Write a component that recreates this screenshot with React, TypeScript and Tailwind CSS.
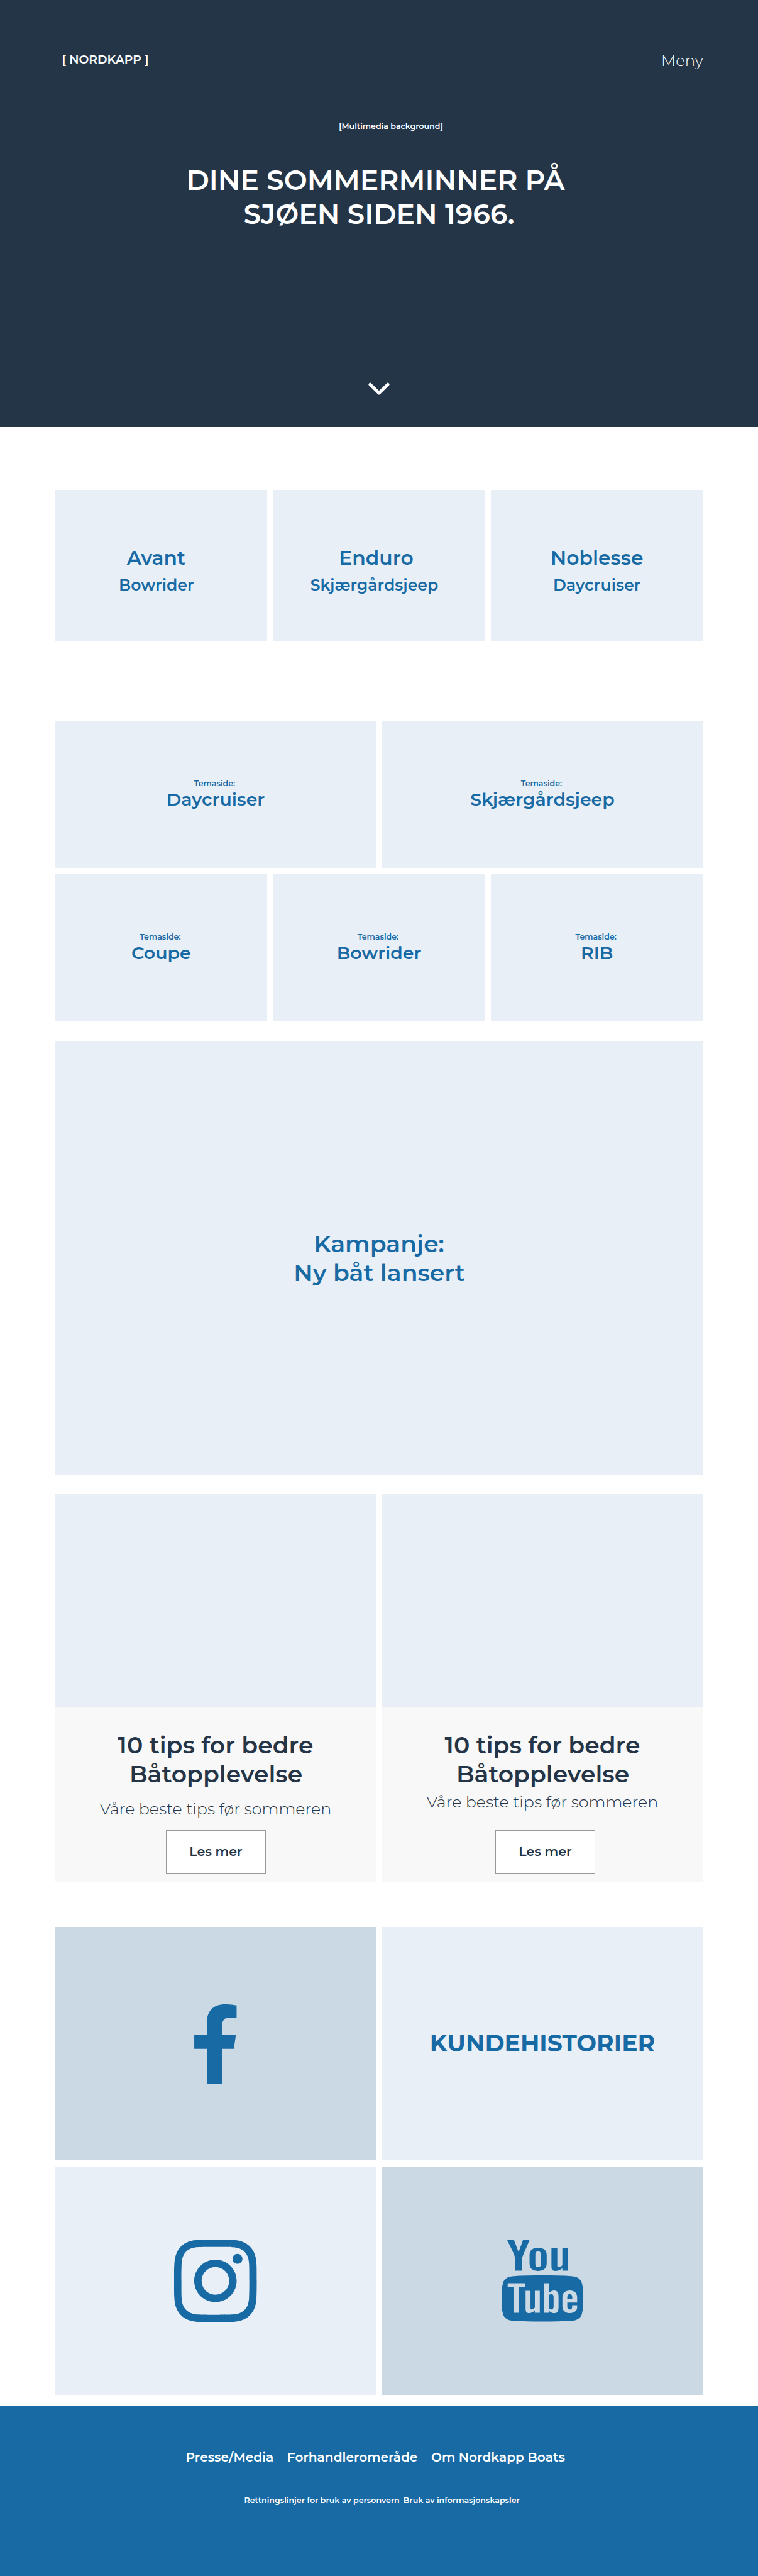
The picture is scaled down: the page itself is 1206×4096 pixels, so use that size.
import React from 'react';
import { TfiYoutube } from 'react-icons/tfi';

type Line = { text: string; className: string };

function Tile({ className, lines }: { className: string; lines: Line[] }) {
  return (
    <a className={`block text-center font-semibold whitespace-nowrap text-[#186aa5] ${className}`}>
      {lines.map((line) => (
        <span key={line.text} className={`block ${line.className}`}>
          {line.text}
        </span>
      ))}
    </a>
  );
}

const MODEL_CARD = 'h-[241px] bg-[#e8eff7] pt-[87px]';
const THEME_LABEL = 'text-[12.6px] leading-4 pr-[3px]';
const THEME_NAME = 'text-[28.4px] leading-[34px]';

function Hero() {
  return (
    <header className="h-[679px] bg-[#253548] text-white">
      <nav className="flex h-[114px] items-start justify-between pt-[78px] pr-[87.5px] pl-[98.5px] leading-[33px]">
        <span className="text-[18.8px] font-semibold">[ NORDKAPP ]</span>
        <a className="mt-[2px] text-[24.3px] font-light">Meny</a>
      </nav>
      <p className="mt-[79px] pl-[38px] text-center text-[12.6px] leading-4 font-semibold">
        [Multimedia background]
      </p>
      <h1 className="mt-[50px] text-center text-[44px] leading-[54px] font-semibold">
        <span className="block pr-[11px]">DINE SOMMERMINNER PÅ</span>
        <span className="block">SJØEN SIDEN 1966.</span>
      </h1>
      <svg className="mx-auto mt-[241px] block" width="34" height="21" viewBox="0 0 34 21" fill="none">
        <path d="M3 3.2L17 16.9L31 3.2" stroke="currentColor" strokeWidth="5" strokeLinecap="round" strokeLinejoin="round" />
      </svg>
    </header>
  );
}

function Models() {
  return (
    <section className="mt-[100px] grid grid-cols-3 gap-[10px]">
      <Tile
        className={MODEL_CARD}
        lines={[
          { text: 'Avant', className: 'pr-4 text-[31.2px] leading-[42px]' },
          { text: 'Bowrider', className: 'pr-[15px] text-[25.2px] leading-[44px]' },
        ]}
      />
      <Tile
        className={MODEL_CARD}
        lines={[
          { text: 'Enduro', className: 'pr-[9px] text-[31.4px] leading-[42px]' },
          { text: 'Skjærgårdsjeep', className: 'pr-[15px] text-[25.2px] leading-[44px]' },
        ]}
      />
      <Tile
        className={MODEL_CARD}
        lines={[
          { text: 'Noblesse', className: 'text-[31.4px] leading-[42px]' },
          { text: 'Daycruiser', className: 'text-[25.3px] leading-[44px]' },
        ]}
      />
    </section>
  );
}

function Theme({ name, className }: { name: string; className: string }) {
  return (
    <Tile
      className={`bg-[#e8eff7] ${className}`}
      lines={[
        { text: 'Temaside:', className: THEME_LABEL },
        { text: name, className: THEME_NAME },
      ]}
    />
  );
}

function Themes() {
  return (
    <section className="mt-[126px] grid gap-[9px]">
      <div className="grid grid-cols-2 gap-[10px]">
        <Theme name="Daycruiser" className="h-[234px] pt-[92px]" />
        <Theme name="Skjærgårdsjeep" className="h-[234px] pt-[92px]" />
      </div>
      <div className="grid grid-cols-3 gap-[10px]">
        <Theme name="Coupe" className="h-[235px] pt-[93px]" />
        <Theme name="Bowrider" className="h-[235px] pt-[93px]" />
        <Theme name="RIB" className="h-[235px] pt-[93px]" />
      </div>
    </section>
  );
}

function Tips({ leadClass, buttonClass }: { leadClass: string; buttonClass: string }) {
  return (
    <article className="text-center whitespace-nowrap text-[#253548]">
      <div className="h-[340px] bg-[#e8eff7]" />
      <div className="h-[277px] bg-[#f8f8f8] pt-[37px]">
        <h3 className="text-[37.7px] leading-[46px] font-semibold">
          <span className="block">10 tips for bedre</span>
          <span className="block pl-px">Båtopplevelse</span>
        </h3>
        <p className={`text-[25.3px] leading-8 font-[350] ${leadClass}`}>Våre beste tips før sommeren</p>
        <button
          className={`block h-[69px] w-[159px] border border-[#999999] bg-white text-[20.6px] font-semibold ${buttonClass}`}
        >
          Les mer
        </button>
      </div>
    </article>
  );
}

function FacebookIcon() {
  return (
    <svg className="h-[126px] w-[67.5px]" viewBox="0 0 322 602" fill="currentColor">
      <path d="M322 8V100H268C232 100 213 122 213 155V230H317L301 338H213V602H96V338H0V230H96V138C96 47 150 0 234 0C278 0 322 8 322 8Z" />
    </svg>
  );
}

function InstagramIcon() {
  return (
    <svg className="h-[131.5px] w-[131.5px]" viewBox="0 0 24 24" fill="currentColor">
      <path d="M12 0C8.74 0 8.333.015 7.053.072 5.775.132 4.905.333 4.14.63c-.789.306-1.459.717-2.126 1.384S.935 3.35.63 4.14C.333 4.905.131 5.775.072 7.053.012 8.333 0 8.74 0 12s.015 3.667.072 4.947c.06 1.277.261 2.148.558 2.913.306.788.717 1.459 1.384 2.126.667.666 1.336 1.079 2.126 1.384.766.296 1.636.499 2.913.558C8.333 23.988 8.74 24 12 24s3.667-.015 4.947-.072c1.277-.06 2.148-.262 2.913-.558.788-.306 1.459-.718 2.126-1.384.666-.667 1.079-1.335 1.384-2.126.296-.765.499-1.636.558-2.913.06-1.28.072-1.687.072-4.947s-.015-3.667-.072-4.947c-.06-1.277-.262-2.149-.558-2.913-.306-.789-.718-1.459-1.384-2.126C21.319 1.347 20.651.935 19.86.63c-.765-.297-1.636-.499-2.913-.558C15.667.012 15.26 0 12 0zm0 2.16c3.203 0 3.585.016 4.85.071 1.17.055 1.805.249 2.227.415.562.217.96.477 1.382.896.419.42.679.819.896 1.381.164.422.36 1.057.413 2.227.057 1.266.07 1.646.07 4.85s-.015 3.585-.074 4.85c-.061 1.17-.256 1.805-.421 2.227-.224.562-.479.96-.899 1.382-.419.419-.824.679-1.38.896-.42.164-1.065.36-2.235.413-1.274.057-1.649.07-4.859.07-3.211 0-3.586-.015-4.859-.074-1.171-.061-1.816-.256-2.236-.421-.569-.224-.96-.479-1.379-.899-.421-.419-.69-.824-.9-1.38-.165-.42-.359-1.065-.42-2.235-.045-1.26-.061-1.649-.061-4.844 0-3.196.016-3.586.061-4.861.061-1.17.255-1.814.42-2.234.21-.57.479-.96.9-1.381.419-.419.81-.689 1.379-.898.42-.166 1.051-.361 2.221-.421 1.275-.045 1.65-.06 4.859-.06l.045.03zm0 3.678c-3.405 0-6.162 2.76-6.162 6.162 0 3.405 2.76 6.162 6.162 6.162 3.405 0 6.162-2.76 6.162-6.162 0-3.405-2.76-6.162-6.162-6.162zM12 16c-2.21 0-4-1.79-4-4s1.79-4 4-4 4 1.79 4 4-1.79 4-4 4zm7.846-10.405c0 .795-.646 1.44-1.44 1.44-.795 0-1.44-.646-1.44-1.44 0-.794.646-1.439 1.44-1.439.793-.001 1.44.645 1.44 1.439z" />
    </svg>
  );
}

/* The stacked wordmark: upper word and lower badge are widened separately. */
function YoutubeIcon() {
  return (
    <span className="flex w-[130px] flex-col items-start gap-[7.5px]">
      <TfiYoutube viewBox="3.737 0 9.013 6.42" preserveAspectRatio="none" className="ml-[9px] h-[49px] w-[97px]" />
      <TfiYoutube viewBox="1.47 7.2 14.06 9.8" preserveAspectRatio="none" className="h-[73.5px] w-[130px]" />
    </span>
  );
}

function Social() {
  return (
    <section className="mt-[72px] grid gap-[10px] text-[#186aa5]">
      <div className="grid h-[371px] grid-cols-2 gap-[10px]">
        <a className="flex items-center justify-center bg-[#cbd9e4]">
          <FacebookIcon />
        </a>
        <a className="flex items-center justify-center bg-[#e8eff7] text-[37.7px] font-bold">KUNDEHISTORIER</a>
      </div>
      <div className="grid h-[363px] grid-cols-2 gap-[10px]">
        <a className="flex items-center justify-center bg-[#e8eff7]">
          <InstagramIcon />
        </a>
        <a className="flex items-center justify-center bg-[#cbd9e4]">
          <YoutubeIcon />
        </a>
      </div>
    </section>
  );
}

function Footer() {
  return (
    <footer className="mt-[18px] h-[270px] bg-[#186aa5] pt-[65px] font-semibold whitespace-nowrap text-white">
      <div className="flex gap-[21.5px] pl-[295.5px] text-[20.2px] leading-8">
        <a>Presse/Media</a>
        <a>Forhandleromeråde</a>
        <a>Om Nordkapp Boats</a>
      </div>
      <div className="mt-[45px] flex gap-[6px] pl-[388.5px] text-[12.6px] leading-4">
        <a>Rettningslinjer for bruk av personvern</a>
        <a>Bruk av informasjonskapsler</a>
      </div>
    </footer>
  );
}

export default function App() {
  return (
    <div className="h-[4096px] w-[1206px] overflow-hidden bg-white font-[Montserrat,Inter,sans-serif]">
      <Hero />
      <main className="mx-[88px]">
        <Models />
        <Themes />
        <Tile
          className="mt-[31px] flex h-[691px] flex-col justify-center bg-[#e8eff7]"
          lines={[
            { text: 'Kampanje:', className: 'text-[37.7px] leading-[46px]' },
            { text: 'Ny båt lansert', className: 'pl-px text-[37.7px] leading-[46px]' },
          ]}
        />
        <section className="mt-[29px] grid grid-cols-2 gap-[10px]">
          <Tips leadClass="mt-4" buttonClass="mt-[18px] ml-[176px]" />
          <Tips leadClass="mt-[5px]" buttonClass="mt-[29px] ml-[180px]" />
        </section>
        <Social />
      </main>
      <Footer />
    </div>
  );
}
